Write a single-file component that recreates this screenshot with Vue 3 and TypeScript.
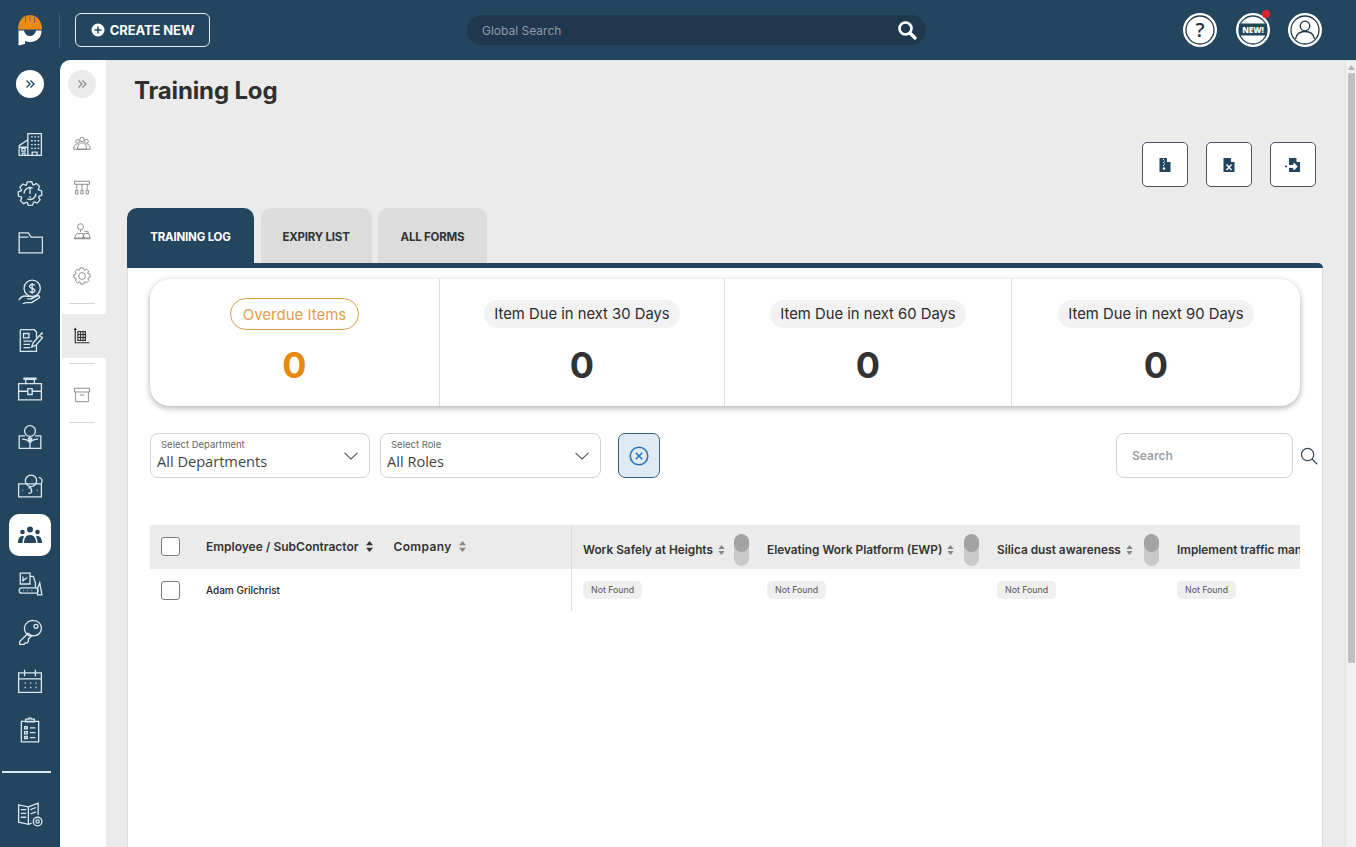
<script setup lang="ts">
function gear(cx: number, cy: number, r1: number, r2: number, teeth: number): string {
  const pts: string[] = []
  const step = (Math.PI * 2) / teeth
  for (let i = 0; i < teeth; i++) {
    const a = i * step - Math.PI / 2
    const offs: [number, number][] = [
      [-0.5, r1], [-0.28, r2], [0.18, r2], [0.4, r1],
    ]
    for (const [o, r] of offs) {
      const t = a + o * step
      pts.push(`${(cx + r * Math.cos(t)).toFixed(2)} ${(cy + r * Math.sin(t)).toFixed(2)}`)
    }
  }
  return 'M' + pts.join('L') + 'Z'
}

const railIcons: { d: string; active?: boolean }[] = [
  { d: 'M10 22.5V2.5h12.5v20H10zM10 8L2 13.5v9h8M13 5.5h1.5M16 5.5h1.5M19 5.5h1.5M13 9h1.5M16 9h1.5M19 9h1.5M13 12.5h1.5M16 12.5h1.5M19 12.5h1.5M13 16h1.5M16 16h1.5M19 16h1.5M4.5 16h3v2.5h-3zM5 22.5v-2h2.5v2M2 15h8M14 22.5v-3h4.5v3' },
  { d: gear(12, 12.5, 8.6, 11, 8) + 'M12 7.5v5.5M12 15v1.8M6.5 12.5a5.5 5.5 0 0 1 8-4.9M17.5 12.5a5.5 5.5 0 0 1-8 4.9' },
  { d: 'M2 3.5h8.5l2.5 4h10.5V22H2zM10.5 7.5H2' },
  { d: 'M14 2a7.5 7.5 0 1 1 0 15 7.5 7.5 0 0 1 0-15zM16.5 6.8c-.6-1-3.5-1.5-4.6 0-.8 1.5.5 2.4 2.1 2.8 1.7.4 3 1.4 2.3 2.8-.9 1.5-3.8 1.2-4.8 0M14 4.5v10M1.5 20.5c2-3 5-4.5 8-3.5h3.5c1.5 0 1.5 2.3 0 2.3H9.5M13 19.3l6-2.8c1.7-.6 2.6 1 1 2.2l-6.5 4H8l-3 1.5' },
  { d: 'M3 2.5h13l2 2.2V10M3 2.5v20h15V17M6 6h5v4H6zM6 13h8M6 16h6M6 19h6M23 5.5l-8 9-1.5 4 4-1.8 8-9zM20.5 7.5l2.5 2.3' },
  { d: 'M1.5 8h21v15h-21zM8 8V4h8v4M6.5 4.5V3h11v1.5M1.5 15h8.5M14 15h8.5M10 12.5h4V18h-4z' },
  { d: 'M12 1.5a5 5 0 1 1 0 10 5 5 0 0 1 0-10zM7.5 11H2v11.500h20V11h-5.500M12 11.500v11M4.500 14c2.500-.5 5 .5 7.500 2.500 2.500-2 5-3 7.500-2.500M10.500 13h3l-.5 3.500h-2z' },
  { d: 'M1.5 10h21v12h-21zM15 12a5.200 5.200 0 1 1 0-9.500 5.200 5.200 0 0 1 0 9.500zM20 4a3.500 3.500 0 0 1 2.500 5.500M10.500 14c1.800-1 3.200 0 2.500 1.800 1.300 1 .3 3.500-2.500 2.500M5 16h.8M18.200 16h.8' },
  { d: '', active: true },
  { d: 'M3 2h9v10H3zM12 5h3l2 6v4M5.500 5v5M5.500 9l4-3M4.500 15.500H17a2.500 2.500 0 0 1 0 5H4.500a2.500 2.500 0 0 1 0-5zM19 22V16l2-5 2 11zM5.500 18h.5M9.500 18h.5M13.500 18h.5' },
  { d: 'M15.500 1.500a7 7 0 1 1-5.300 11.600L2.500 20.800v2.700h4l1-1.500h2l1-1.500v-2l2.500-2.500A7 7 0 0 1 15.500 1.500zM17.500 5a1.800 1.800 0 1 1 0 3.600 1.800 1.800 0 0 1 0-3.600z' },
  { d: 'M1.500 4.500h21v18h-21zM1.500 10h21M7 1.500v6M17 1.500v6M7 14h1.200M12 14h1.200M17 14h1.200M7 18h1.200M12 18h1.200M17 18h1.200' },
  { d: 'M4 4h16v19H4zM8 4V2h3V1h2v1h3v2.500H8zM7 9h2.500v2H7zM7 13.500h2.500v2H7zM7 18h2.500v2H7zM12 10h5M12 14.500h5M12 19h5' },
]

const subIcons: { d: string; active?: boolean; sep?: boolean }[] = [
  { d: 'M12 9a3 3 0 1 1 0-6 3 3 0 0 1 0 6zM6 11a2.500 2.500 0 1 1 0-5 2.500 2.500 0 0 1 0 5zM18 11a2.500 2.500 0 1 1 0-5 2.500 2.500 0 0 1 0 5zM1 19c0-5 2-7 5-7M23 19c0-5-2-7-5-7M6 19c0-6 3-8.500 6-8.500s6 2.500 6 8.500zM1 19h22' },
  { d: 'M2 3h20v4H2zM5 7v3M12 7v3M19 7v3M5 10v4M12 10v4M19 10v4M3.500 15h3v5h-3zM10.500 15h3v5h-3zM17.500 15h3v5h-3z' },
  { d: 'M10 9a4 4 0 1 1 0-8 4 4 0 0 1 0 8zM10 9v3M2 20l3-6h8l2 6zM13 20l2-6h6l2 6zM1 21h22M15 11h5v3' },
  { d: gear(12, 12, 8.600, 11, 8) + 'M12 7.500a4.500 4.500 0 1 1 0 9 4.500 4.500 0 0 1 0-9z' },
  { d: '', sep: true },
  { d: 'M3 2v19h19M1.500 4L3 2l1.500 2M6.500 6h10v12h-10zM6.500 10h10M6.500 14h10M10 6v12M13.500 6v12', active: true },
  { d: '', sep: true },
  { d: 'M2 3h20v5H2zM3.500 8v13h17V8M9 12h6' },
  { d: '', sep: true },
]

const statCells = [
  { label: 'Overdue Items', value: 0, overdue: true },
  { label: 'Item Due in next 30 Days', value: 0 },
  { label: 'Item Due in next 60 Days', value: 0 },
  { label: 'Item Due in next 90 Days', value: 0 },
]

const columns = [
  { label: 'Work Safely at Heights', width: 184 },
  { label: 'Elevating Work Platform (EWP)', width: 230 },
  { label: 'Silica dust awareness', width: 180 },
  { label: 'Implement traffic management', width: 200, noHandle: true },
]
</script>

<template>
  <div class="page">
    <header class="top">
      <div class="logo">
        <svg width="26" height="32" viewBox="0 0 26 32">
          <path d="M1 15.500C1 7 6 1 13 1s12 6 12 14.500z" fill="#ec8b14" />
          <path d="M8.500 2v7M17.500 2v7M13 1v6" stroke="#23455e" stroke-width=".5" />
          <path d="M1.500 16.500H7c.6 3.500 3 5.500 6 5.500s5.400-2 6-5.500h5.500C24.500 24 19.500 28 13 28c-1.800 0-3.400-.3-5-1v3l-6.500 1.500z" fill="#fff" />
        </svg>
      </div>
      <span class="top-div"></span>
      <button class="create">
        <svg width="14" height="14" viewBox="0 0 14 14"><circle cx="7" cy="7" r="6.500" fill="#fff" /><path d="M7 3.500v7M3.500 7h7" stroke="#23455e" stroke-width="1.500" /></svg>
        CREATE NEW
      </button>
      <div class="global">
        <span>Global Search</span>
        <svg width="20" height="20" viewBox="0 0 20 20" fill="none" stroke="#fff"><circle cx="8.500" cy="8.500" r="6" stroke-width="2.600" /><path d="M13 13l5 5" stroke-width="3.200" stroke-linecap="round" /></svg>
      </div>
      <div class="top-right">
        <svg class="round" viewBox="0 0 34 34">
          <circle cx="17" cy="17" r="17" fill="#fff" />
          <circle cx="17" cy="17" r="14" fill="none" stroke="#23384b" stroke-width="1.300" />
          <text x="17" y="24" text-anchor="middle" class="q">?</text>
        </svg>
        <div class="newwrap">
          <svg class="round" viewBox="0 0 34 34">
            <circle cx="17" cy="17" r="17" fill="#fff" />
            <circle cx="17" cy="17" r="14" fill="none" stroke="#23455e" stroke-width="1.300" />
            <rect x="3" y="10.500" width="28" height="12" fill="#23455e" />
            <text x="17" y="20" text-anchor="middle" class="nw">NEW!</text>
          </svg>
          <i class="dot"></i>
        </div>
        <svg class="round" viewBox="0 0 34 34">
          <circle cx="17" cy="17" r="17" fill="#fff" />
          <circle cx="17" cy="17" r="14" fill="none" stroke="#23384b" stroke-width="1.300" />
          <circle cx="17" cy="13" r="4.800" fill="none" stroke="#23384b" stroke-width="1.300" />
          <path d="M7.500 26c1-6 5-7.500 9.500-7.500s8.500 1.500 9.500 7.500" fill="none" stroke="#23384b" stroke-width="1.300" />
        </svg>
      </div>
    </header>

    <div class="body">
      <nav class="rail">
        <button class="rail-toggle">
          <svg width="12" height="12" viewBox="0 0 12 12" fill="none" stroke="#23455e" stroke-width="1.400"><path d="M2.500 2.500L6 6l-3.500 3.500M6.500 2.500L10 6l-3.500 3.500" /></svg>
        </button>
        <div class="rail-list">
          <div v-for="(ic, i) in railIcons" :key="i" class="rail-item">
            <span v-if="ic.active" class="tile">
              <svg width="24" height="18" viewBox="0 0 24 18" fill="#23455e">
                <circle cx="12" cy="3.500" r="3" /><circle cx="4.500" cy="6" r="2.300" /><circle cx="19.500" cy="6" r="2.300" />
                <path d="M6 17c0-5 2-8 6-8s6 3 6 8zM0 17c0-4 1.500-7 4.500-7 .7 0 1.300.2 1.800.5C5 12 4.500 14 4.500 17zM24 17c0-4-1.500-7-4.500-7-.7 0-1.300.2-1.800.5 1.300 1.500 1.800 3.500 1.800 6.500z" />
              </svg>
            </span>
            <svg v-else width="26" height="26" viewBox="0 0 24 24" fill="none" stroke="#dbe8ef" stroke-width="1.200"><path :d="ic.d" /></svg>
          </div>
        </div>
        <div class="rail-sep"></div>
        <div class="rail-foot">
          <svg width="26" height="26" viewBox="0 0 24 24" fill="none" stroke="#dbe8ef" stroke-width="1.200">
            <path d="M1.500 3.500l9 2v16l-9-2zM10.500 5.500l9-3.500v11M10.500 21.500l3-1M3.500 8h5M3.500 11.500h5M3.500 15h5M12.500 8l5-2M12.500 12l5-2" />
            <circle cx="19" cy="19" r="4" /><circle cx="19" cy="19" r="1.500" />
          </svg>
        </div>
      </nav>

      <aside class="sub">
        <button class="sub-toggle">
          <svg width="12" height="12" viewBox="0 0 12 12" fill="none" stroke="#8b8b8b" stroke-width="1.200"><path d="M2.500 2.500L6 6l-3.500 3.500M6.500 2.500L10 6l-3.500 3.500" /></svg>
        </button>
        <div class="sub-list">
          <template v-for="(ic, i) in subIcons" :key="i">
            <div v-if="ic.sep" class="sub-sep"></div>
            <div v-else class="sub-item" :class="{ on: ic.active }">
              <svg width="18" height="18" viewBox="0 0 24 24" fill="none" :stroke="ic.active ? '#333' : '#777'" :stroke-width="ic.active ? 1.600 : 1.100"><path :d="ic.d" /></svg>
            </div>
          </template>
        </div>
      </aside>

      <main class="main">
        <div class="main-in">
          <h1>Training Log</h1>
          <div class="actions">
            <button class="act">
              <svg width="14" height="16" viewBox="0 0 14 16"><path d="M1.500 1h7l4 4v10h-11z" fill="#23455e" /><path d="M9 1v4h4" fill="#fff" /><path d="M5.500 2v1M6.500 3.500v1M5.500 5v1M6.500 6.500v1M5.500 8v1" stroke="#fff" /><circle cx="6" cy="11.500" r="1.300" fill="#fff" /></svg>
            </button>
            <button class="act">
              <svg width="14" height="16" viewBox="0 0 14 16"><path d="M1.500 1h7l4 4v10h-11z" fill="#23455e" /><path d="M9 1v4h4" fill="#fff" /><path d="M4.500 7.500l5 5.500M9.500 7.500l-5 5.500" stroke="#fff" stroke-width="1.400" /></svg>
            </button>
            <button class="act">
              <svg width="18" height="16" viewBox="0 0 18 16"><path d="M5 1h7l4 4v10H5z" fill="#23455e" /><path d="M12.500 1v4h4" fill="#fff" /><path d="M1 9.500h2M4 9.500h8" stroke="#fff" stroke-width="3" /><path d="M1 9.500h2" stroke="#23455e" stroke-width="1.400" /><path d="M5 9.500h7M9.500 6.500l3 3-3 3" stroke="#fff" stroke-width="1.800" fill="none" /></svg>
            </button>
          </div>

          <div class="tabs">
            <button class="tab on t1">TRAINING LOG</button>
            <button class="tab t2">EXPIRY LIST</button>
            <button class="tab t3">ALL FORMS</button>
          </div>
          <div class="tabbar"></div>

          <section class="card">
            <div class="stats">
              <div v-for="c in statCells" :key="c.label" class="stat">
                <span class="pill" :class="{ over: c.overdue }">{{ c.label }}</span>
                <b class="num" :class="{ over: c.overdue }">{{ c.value }}</b>
              </div>
            </div>

            <div class="filters">
              <div class="sel s1">
                <small>Select Department</small>
                <span>All Departments</span>
                <svg width="14" height="8" viewBox="0 0 14 8" fill="none" stroke="#555" stroke-width="1.100"><path d="M.5.800L7 7 13.500.8" /></svg>
              </div>
              <div class="sel s2">
                <small>Select Role</small>
                <span>All Roles</span>
                <svg width="14" height="8" viewBox="0 0 14 8" fill="none" stroke="#555" stroke-width="1.100"><path d="M.5.800L7 7 13.500.8" /></svg>
              </div>
              <button class="clear">
                <svg width="20" height="20" viewBox="0 0 20 20" fill="none" stroke="#2a74b4" stroke-width="1.600"><circle cx="10" cy="10" r="8.800" /><path d="M6.800 6.800l6.400 6.400M13.200 6.800l-6.400 6.400" /></svg>
              </button>
              <div class="search">Search</div>
              <svg class="mag" width="18" height="18" viewBox="0 0 19 19" fill="none" stroke="#3c4a55" stroke-width="1.300"><circle cx="8" cy="8" r="6.500" /><path d="M12.700 12.700l5.500 5.500" /></svg>
            </div>

            <div class="table">
              <div class="thead">
                <div class="frozen head-frozen">
                  <span class="box"></span>
                  <span class="h emp">Employee / SubContractor</span>
                  <svg class="sort" width="7" height="11" viewBox="0 0 7 11" fill="#333"><path d="M3.500 0L7 4.300H0zM3.500 11L0 6.700h7z" /></svg>
                  <span class="h comp">Company</span>
                  <svg class="sort" width="7" height="11" viewBox="0 0 7 11" fill="#888"><path d="M3.500 0L7 4.300H0zM3.500 11L0 6.700h7z" /></svg>
                </div>
                <div v-for="c in columns" :key="c.label" class="col" :style="{ width: c.width + 'px' }">
                  <span class="h rh">{{ c.label }}</span>
                  <template v-if="!c.noHandle">
                    <svg class="sort2" width="7" height="10" viewBox="0 0 7 11" fill="#888"><path d="M3.500 0L7 4.300H0zM3.500 11L0 6.700h7z" /></svg>
                    <span class="handle"><i></i></span>
                  </template>
                </div>
              </div>
              <div class="trow">
                <div class="frozen row-frozen">
                  <span class="box"></span>
                  <span class="name">Adam Grilchrist</span>
                </div>
                <div v-for="c in columns" :key="c.label" class="cell" :style="{ width: c.width + 'px' }">
                  <span class="nf">Not Found</span>
                </div>
              </div>
            </div>
          </section>
        </div>
        <div class="scrollbar">
          <svg width="7" height="5" viewBox="0 0 7 5" fill="#b5b5b5"><path d="M3.500 0L7 5H0z" /></svg>
          <i></i>
        </div>
      </main>
    </div>
  </div>
</template>

<style>
html, body { margin: 0; overflow: hidden; }
</style>

<style scoped>
.page {
  width: 1356px; height: 847px; overflow: hidden;
  display: flex; flex-direction: column;
  background: #23455e;
  font-family: Inter, "Liberation Sans", sans-serif;
  color: #333;
}
button { font-family: inherit; cursor: pointer; padding: 0; }

.top { height: 60px; flex: none; display: flex; align-items: center; position: relative; }
.logo { width: 59px; display: flex; justify-content: center; padding-left: 1px; box-sizing: border-box; }
.top-div { width: 1px; height: 35px; background: #3f5f76; }
.create {
  margin-left: 15px; width: 135px; height: 34px; box-sizing: border-box;
  background: none; border: 1px solid #e3edf2; border-radius: 6px;
  color: #fff; font-weight: 700; font-size: 13px; letter-spacing: -.1px;
  display: flex; align-items: center; justify-content: center; gap: 5px;
}
.global {
  margin-left: 257px; width: 459px; height: 30px; box-sizing: border-box;
  padding: 0 9px 0 15px; background: #20384e; border-radius: 15px;
  display: flex; align-items: center; justify-content: space-between;
  color: #8c9aa6; font-size: 12px;
}
.top-right { margin-left: auto; padding-right: 34px; display: flex; gap: 18.500px; }
.round { width: 34px; height: 34px; display: block; }
.q { font: 600 20px "Open Sans", sans-serif; fill: #23384b; }
.nw { font: 800 8px "Open Sans", sans-serif; fill: #fff; }
.newwrap { position: relative; }
.dot { position: absolute; right: 0; top: -3px; width: 8px; height: 8px; border-radius: 50%; background: #d9252e; }

.body { flex: 1; display: flex; min-height: 0; }
.rail { width: 60px; flex: none; position: relative; display: flex; flex-direction: column; align-items: center; }
.rail-toggle {
  width: 28px; height: 28px; margin-top: 10px; border: 0; border-radius: 50%; background: #fff;
  display: flex; align-items: center; justify-content: center;
}
.rail-list { margin-top: 22px; display: flex; flex-direction: column; width: 100%; }
.rail-item { height: 48.800px; display: flex; align-items: center; justify-content: center; }
.tile { width: 42px; height: 42px; background: #fff; border-radius: 10px; display: flex; align-items: center; justify-content: center; }
.rail-sep { width: 49px; height: 1.500px; background: #dbe8ef; margin: 17px 7px 0 0; }
.rail-foot { margin-top: 28px; }

.sub {
  width: 46px; flex: none; background: #fff; border-top-left-radius: 10px;
  display: flex; flex-direction: column; align-items: center;
}
.sub-toggle {
  width: 28px; height: 28px; margin: 10px 2px 0 0; border: 0; border-radius: 50%; background: #ebebeb;
  display: flex; align-items: center; justify-content: center;
}
.sub-list { margin-top: 24px; width: 100%; display: flex; flex-direction: column; align-items: center; }
.sub-item { width: 100%; height: 44px; padding-right: 2px; box-sizing: border-box; display: flex; align-items: center; justify-content: center; }
.sub-item.on { width: 44px; margin-left: 2px; padding-right: 4px; background: #ebebeb; }
.sub-sep { width: 26px; height: 1px; background: #d5d5d5; margin: 5px 2px 9.500px 0; }

.main { flex: 1; min-width: 0; display: flex; background: #ebebeb; border-top: 1px solid #d5e2ec; box-sizing: border-box; }
.main-in { flex: 1; min-width: 0; padding: 0 22px 0 21px; }
h1 { margin: 15px 0 0 7px; height: 29px; font-size: 24px; line-height: 29px; font-weight: 700; color: #2f2f2f; letter-spacing: -.15px; }
.actions { display: flex; justify-content: flex-end; gap: 18px; margin: 37px 7px 0 0; }
.act {
  width: 46px; height: 45px; box-sizing: border-box; background: #fff;
  border: 1px solid #4b5560; border-radius: 5px; display: flex; align-items: center; justify-content: center;
}
.tabs { display: flex; gap: 6.500px; margin-top: 21px; height: 55px; }
.tabbar { height: 5px; background: #23455e; border-top-right-radius: 5px; }
.tab {
  height: 55px; border: 0; border-radius: 10px 10px 0 0; background: #dcdcdc; color: #333;
  font-size: 11.500px; font-weight: 700; letter-spacing: -.2px; padding-top: 3px;
}
.tab.on { background: #23455e; color: #fff; }
.t1 { width: 127px; }
.t2 { width: 111px; }
.t3 { width: 109px; }

.card {
  background: #fff; border: 1px solid #dedede; border-top: 0; border-bottom: 0;
  height: 640px; padding: 11px 22px 0; box-sizing: border-box;
}
.stats {
  height: 127px; border-radius: 20px; background: #fff;
  box-shadow: 0 2px 6px rgba(0, 0, 0, .32);
  display: grid; grid-template-columns: 290px 285px 287px 1fr;
}
.stat { display: flex; flex-direction: column; align-items: center; border-right: 1px solid #ddd; padding-top: 19px; box-sizing: border-box; }
.stat:last-child { border-right: 0; }
.pill {
  height: 32px; box-sizing: border-box; display: flex; align-items: center; padding: 0 10px;
  border-radius: 16px; background: #f2f2f2; font-size: 14.800px; color: #2b2b2b; white-space: nowrap;
  border: 2px solid #fff;
}
.pill.over { background: #fff; border: 1px solid #dc9f4a; color: #dc9f4a; padding: 0 12px; font-size: 15px; }
.num { font-size: 36px; line-height: 46px; font-weight: 700; margin-top: 12px; color: #333; }
.num.over { color: #e58a0c; }

.filters { display: flex; align-items: center; margin-top: 27px; height: 45px; }
.sel {
  height: 45px; box-sizing: border-box; position: relative; background: #fff;
  border: 1px solid #d2d2d2; border-radius: 8px; display: flex; flex-direction: column; padding: 5px 0 0 6px;
}
.s1 { width: 220px; }
.s2 { width: 221px; margin-left: 10px; }
.sel small { font-size: 9.500px; line-height: 12px; color: #666; padding-left: 4px; }
.sel span { font: 400 14.600px/20px "Open Sans", sans-serif; color: #444; }
.sel svg { position: absolute; right: 11px; top: 18px; }
.clear {
  width: 42px; height: 45px; margin-left: 17px; box-sizing: border-box;
  background: #dfeaf3; border: 1px solid #36607f; border-radius: 7px;
  display: flex; align-items: center; justify-content: center;
}
.search {
  margin-left: auto; width: 177px; height: 45px; box-sizing: border-box;
  border: 1px solid #d2d2d2; border-radius: 8px; padding-left: 15px;
  display: flex; align-items: center; font-size: 12px; font-weight: 600; color: #9a9fa6;
}
.mag { margin: 0 -18px 0 7px; flex: none; }

.table { margin-top: 47px; width: 1150px; overflow: hidden; }
.thead { display: flex; height: 44px; background: #ebebeb; }
.frozen { width: 422px; flex: none; box-sizing: border-box; display: flex; align-items: center; border-right: 1px solid #dcdcdc; padding-left: 11px; }
.head-frozen { padding-bottom: 2px; }
.box { width: 19px; height: 19px; flex: none; box-sizing: border-box; border: 1px solid #7c7c7c; border-radius: 3px; background: #fff; }
.h { font-size: 12px; font-weight: 600; color: #333; white-space: nowrap; }
.rh { font-size: 11.800px; }
.emp { margin-left: 26px; }
.sort { margin-left: 7px; flex: none; }
.comp { margin-left: 21px; letter-spacing: .35px; }
.col { flex: none; box-sizing: border-box; padding: 5px 7px 0 11px; display: flex; align-items: center; overflow: hidden; }
.sort2 { margin-left: 5px; flex: none; }
.handle { margin-left: auto; width: 15px; height: 32px; border-radius: 8px; background: #c9c9c9; overflow: hidden; flex: none; }
.handle i { display: block; height: 18px; background: #a3a3a3; border-radius: 8px; }
.trow { display: flex; height: 42px; }
.name { margin-left: 26px; font-size: 10px; font-weight: 500; color: #222; }
.cell { flex: none; box-sizing: border-box; padding: 12px 0 0 11px; display: flex; align-items: flex-start; }
.nf {
  display: block; height: 18px; line-height: 17px; padding: 0 8px; border-radius: 5px;
  background: #efefef; font-size: 8.800px; color: #555; white-space: nowrap;
}

.scrollbar { width: 11px; flex: none; background: #f1f1f1; border-left: 1px solid #e2e2e2; box-sizing: border-box; display: flex; flex-direction: column; align-items: center; padding-top: 4px; }
.scrollbar i { display: block; width: 7px; height: 590px; margin-top: 3px; background: #c1c1c1; border-radius: 1px; }
</style>
